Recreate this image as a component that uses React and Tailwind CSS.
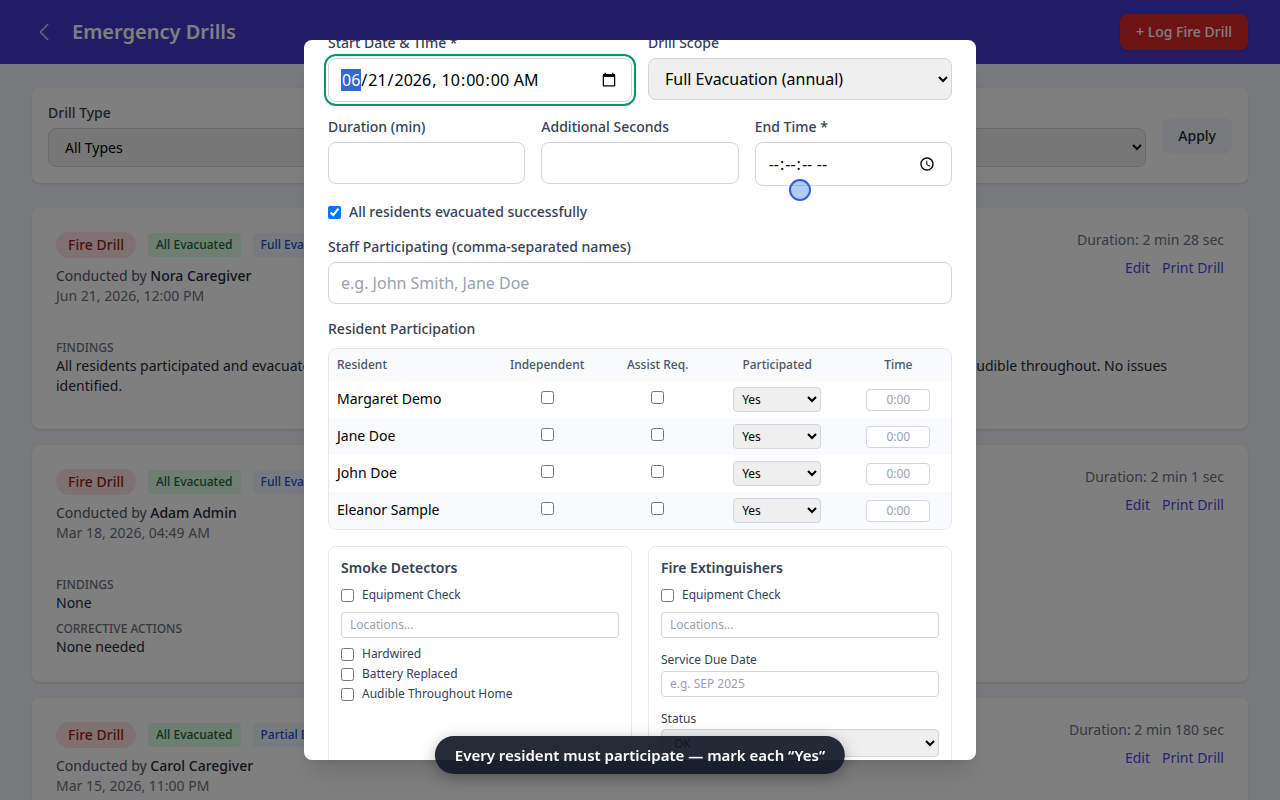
import React, { useLayoutEffect, useRef } from 'react'

const drills = [
  {
    id: 1,
    scope: 'Full Evacuation',
    by: 'Nora Caregiver',
    date: 'Jun 21, 2026, 12:00 PM',
    duration: '2 min 28 sec',
    notes: [
      {
        title: 'Findings',
        text: 'All residents participated and evacuated the home calmly and safely to the designated meeting point in the front yard. Smoke alarms were audible throughout. No issues identified.',
      },
    ],
  },
  {
    id: 2,
    scope: 'Full Evacuation',
    by: 'Adam Admin',
    date: 'Mar 18, 2026, 04:49 AM',
    duration: '2 min 1 sec',
    notes: [
      { title: 'Findings', text: 'None' },
      { title: 'Corrective Actions', text: 'None needed' },
    ],
  },
  {
    id: 3,
    scope: 'Partial Evacuation',
    by: 'Carol Caregiver',
    date: 'Mar 15, 2026, 11:00 PM',
    duration: '2 min 180 sec',
    notes: [],
  },
]

const residents = ['Margaret Demo', 'Jane Doe', 'John Doe', 'Eleanor Sample']

const fieldClass = 'w-full rounded-lg border border-gray-300 px-3 py-2 text-base text-black placeholder:text-gray-400'
const smallField = 'block w-full rounded border border-gray-300 px-2 py-1 text-xs text-black placeholder:text-gray-400'

function DrillCard({ drill }) {
  return (
    <div className="min-h-[221px] rounded-lg bg-white px-6 pt-[22px] pb-[25px] shadow">
      <div className="flex items-start justify-between">
        <div className="pt-0.5">
          <div className="mb-2 flex items-center gap-3">
            <span className="rounded-full bg-[#fee2e2] px-3 py-[3px] text-sm font-medium text-[#991b1b]">Fire Drill</span>
            <span className="rounded bg-[#dcfce7] px-2 py-1 text-xs font-medium text-[#166534]">All Evacuated</span>
            <span className="rounded bg-[#eff6ff] px-2 py-1 text-xs font-medium text-[#1d4ed8]">{drill.scope}</span>
          </div>
          <p className="text-sm text-gray-600">
            Conducted by <span className="font-medium text-gray-800">{drill.by}</span>
          </p>
          <p className="text-sm text-gray-500">{drill.date}</p>
        </div>
        <div className="text-right text-sm">
          <p className="text-gray-500">Duration: {drill.duration}</p>
          <div className="mt-2 flex justify-end gap-3 text-[#4f46e5]">
            <a href="#edit">Edit</a>
            <a href="#print">Print Drill</a>
          </div>
        </div>
      </div>
      <div className="mt-[34px] space-y-2">
        {drill.notes.map((note) => (
          <div key={note.title}>
            <p className="text-xs font-medium text-gray-500 uppercase">{note.title}</p>
            <p className="text-sm text-gray-800">{note.text}</p>
          </div>
        ))}
      </div>
    </div>
  )
}

function Field({ id, label, children }) {
  return (
    <div>
      <label htmlFor={id} className="mb-1.5 block text-sm leading-[18px] font-medium text-gray-700">{label}</label>
      {children}
    </div>
  )
}

function Check({ label }) {
  return (
    <label className="flex items-center gap-2 text-xs text-gray-700">
      <input type="checkbox" className="size-[13px]" />
      {label}
    </label>
  )
}

function ResidentTable() {
  return (
    <div className="overflow-hidden rounded-lg border border-gray-200">
      <table className="w-full text-sm">
        <thead className="bg-gray-50 text-xs text-gray-600">
          <tr>
            <th className="px-2 py-2 text-left font-medium">Resident</th>
            <th className="px-2 py-2 text-center font-medium">Independent</th>
            <th className="px-2 py-2 text-center font-medium">Assist Req.</th>
            <th className="px-2 py-2 text-center font-medium">Participated</th>
            <th className="px-2 py-2 text-center font-medium">Time</th>
          </tr>
        </thead>
        <tbody>
          {residents.map((name) => (
            <tr key={name} className="bg-white even:bg-gray-50">
              <td className="px-2 pt-1 pb-1.5 text-black">{name}</td>
              <td className="px-2 pt-1 pb-1.5 text-center">
                <input type="checkbox" aria-label={`${name} independent`} className="size-[13px]" />
              </td>
              <td className="px-2 pt-1 pb-1.5 text-center">
                <input type="checkbox" aria-label={`${name} assist required`} className="size-[13px]" />
              </td>
              <td className="px-2 py-1.5">
                <select aria-label={`${name} participated`} className="mx-auto block h-[25px] w-[88px] rounded border border-gray-300 bg-[#efefef] px-1 text-xs text-black">
                  <option>Yes</option>
                </select>
              </td>
              <td className="px-2 py-1.5">
                <input type="text" placeholder="0:00" aria-label={`${name} time`} className="mx-auto block h-[22px] w-16 rounded border border-gray-300 bg-white px-1 text-center text-xs placeholder:text-gray-400" />
              </td>
            </tr>
          ))}
        </tbody>
      </table>
    </div>
  )
}

function DrillModal() {
  const panelRef = useRef(null)
  const startRef = useRef(null)

  // jump straight to the start time field
  useLayoutEffect(() => {
    startRef.current.focus({ preventScroll: true })
    panelRef.current.scrollTop = 30
  }, [])

  return (
    <div className="fixed inset-0 z-10 flex items-center justify-center bg-black/50">
      <form ref={panelRef} className="max-h-[90vh] w-full max-w-2xl space-y-4 overflow-y-auto rounded-lg bg-white p-6 shadow-xl [scrollbar-width:none]">
        <div className="grid grid-cols-2 gap-4">
          <Field id="start" label="Start Date & Time *">
            <input
              ref={startRef}
              id="start"
              type="datetime-local"
              step="1"
              defaultValue="2026-06-21T10:00:00"
              className={`${fieldClass} h-11 focus:outline-2 focus:outline-offset-2 focus:outline-[#059669]`}
            />
          </Field>
          <Field id="scope" label="Drill Scope">
            <select id="scope" className={`${fieldClass} bg-[#efefef]`}>
              <option>Full Evacuation (annual)</option>
            </select>
          </Field>
        </div>

        <div className="grid grid-cols-3 gap-4">
          <Field id="duration" label="Duration (min)">
            <input id="duration" type="number" className={fieldClass} />
          </Field>
          <Field id="seconds" label="Additional Seconds">
            <input id="seconds" type="number" className={fieldClass} />
          </Field>
          <Field id="end" label="End Time *">
            <input id="end" type="time" step="1" className={`${fieldClass} h-11`} />
          </Field>
        </div>

        <label className="flex items-center gap-2 text-sm font-medium text-gray-700">
          <input type="checkbox" defaultChecked className="size-[13px]" />
          All residents evacuated successfully
        </label>

        <Field id="staff" label="Staff Participating (comma-separated names)">
          <input id="staff" type="text" placeholder="e.g. John Smith, Jane Doe" className={fieldClass} />
        </Field>

        <div>
          <p className="mb-2.5 text-sm leading-[18px] font-medium text-gray-700">Resident Participation</p>
          <ResidentTable />
        </div>

        <div className="grid grid-cols-2 gap-4">
          <div className="rounded-lg border border-gray-200 p-3">
            <h4 className="mb-2.5 text-sm leading-[18px] font-semibold text-gray-700">Smoke Detectors</h4>
            <Check label="Equipment Check" />
            <input type="text" placeholder="Locations..." aria-label="Smoke detector locations" className={`${smallField} mt-[9px] mb-2`} />
            <div className="space-y-1">
              <Check label="Hardwired" />
              <Check label="Battery Replaced" />
              <Check label="Audible Throughout Home" />
            </div>
          </div>
          <div className="rounded-lg border border-gray-200 p-3">
            <h4 className="mb-2.5 text-sm leading-[18px] font-semibold text-gray-700">Fire Extinguishers</h4>
            <Check label="Equipment Check" />
            <input type="text" placeholder="Locations..." aria-label="Extinguisher locations" className={`${smallField} mt-[9px] mb-3`} />
            <label htmlFor="due" className="mb-px block text-xs leading-5 text-gray-700">Service Due Date</label>
            <input id="due" type="text" placeholder="e.g. SEP 2025" className={`${smallField} mb-3`} />
            <label htmlFor="status" className="block text-xs leading-5 text-gray-700">Status</label>
            <select id="status" className={`${smallField} h-7 bg-[#efefef]`}>
              <option>OK</option>
            </select>
          </div>
        </div>
      </form>
    </div>
  )
}

function App() {
  return (
    <div className="h-screen overflow-hidden bg-gray-100 font-['Noto_Sans',sans-serif]">
      <header className="flex h-16 items-center justify-between bg-[#4338ca] px-8 text-white">
        <div className="flex items-center gap-4">
          <a href="#back" aria-label="Back" className="text-[#c7d2fe]">
            <svg className="size-6" fill="none" viewBox="0 0 24 24" strokeWidth="1.5" stroke="currentColor">
              <path strokeLinecap="round" strokeLinejoin="round" d="M15.75 19.5 8.25 12l7.5-7.5" />
            </svg>
          </a>
          <h1 className="text-xl font-semibold">Emergency Drills</h1>
        </div>
        <button className="rounded-lg bg-[#dc2626] px-4 py-2 text-sm font-medium shadow">+ Log Fire Drill</button>
      </header>

      <main className="p-8 pt-6">
        <div className="mb-[25px] flex items-center gap-4 rounded-lg bg-white p-4 shadow">
          <div className="flex-1">
            <label htmlFor="type" className="mb-1.5 block text-sm leading-[18px] font-medium text-gray-700">Drill Type</label>
            <select id="type" className="block w-full rounded-lg border border-gray-300 bg-[#efefef] px-3 py-2 text-sm text-black">
              <option>All Types</option>
            </select>
          </div>
          <button className="rounded-lg bg-gray-100 px-4 py-2 text-sm font-medium text-gray-800">Apply</button>
        </div>
        <div className="space-y-4">
          {drills.map((drill) => (
            <DrillCard key={drill.id} drill={drill} />
          ))}
        </div>
      </main>

      <DrillModal />

      {/* pointer marker */}
      <div className="pointer-events-none fixed top-[179px] left-[789px] z-20 size-[22px] rounded-full border-2 border-[#2f5fd8] bg-[#3b82f6]/40" />

      <div role="status" className="fixed bottom-[26px] left-1/2 z-20 -translate-x-1/2 rounded-full bg-[#111827]/92 px-5 py-2 text-[15px] leading-[22px] font-semibold whitespace-nowrap text-white shadow-[0_4px_16px_rgba(0,0,0,0.3)]">
        Every resident must participate — mark each “Yes”
      </div>
    </div>
  )
}

export default App
